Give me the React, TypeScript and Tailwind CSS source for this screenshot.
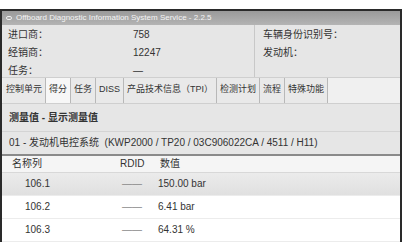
const font = { fontFamily: '"Liberation Sans", "Noto Sans CJK SC", sans-serif' };

const tabs = ['控制单元', '得分', '任务', 'DISS', '产品技术信息（TPI）', '检测计划', '流程', '特殊功能'];

const rows = [
  { name: '106.1', rdid: '——', value: '150.00 bar' },
  { name: '106.2', rdid: '——', value: '6.41 bar' },
  { name: '106.3', rdid: '——', value: '64.31 %' },
];

export default function App() {
  return (
    <div className="w-[407px] h-[242px] bg-white pt-[9px] overflow-hidden text-[#333]" style={font}>
      <div className="w-[402px] h-[233px] border-l-2 border-r-2 border-t-2 border-[#2a2a2a] bg-[#e6e6e6] flex flex-col">
        <div className="h-[14px] bg-gradient-to-b from-[#9a9a9a] to-[#b4b4b4] flex items-center px-1 gap-1 text-[8px] text-[#f4f4f4]">
          <span className="w-[6px] h-[4px] border border-[#eee] rounded-sm" />
          <span>Offboard Diagnostic Information System Service - 2.2.5</span>
        </div>

        <div className="flex h-[53px] text-[10px] border-b border-[#cfcfcf]">
          <div className="w-[253px] border-r border-[#c8c8c8] flex flex-col px-[6px] pt-[4px] gap-[6px]">
            {[
              ['进口商：', '758'],
              ['经销商：', '12247'],
              ['任务：', '—'],
            ].map(([k, v]) => (
              <div key={k} className="flex h-[12px] items-center">
                <span className="w-[125px]">{k}</span>
                <span>{v}</span>
              </div>
            ))}
          </div>
          <div className="flex-1 flex flex-col pl-[8px] pt-[4px] gap-[6px]">
            <div className="h-[12px] flex items-center">车辆身份识别号：</div>
            <div className="h-[12px] flex items-center">发动机：</div>
          </div>
        </div>

        <div className="flex h-[27px] bg-[#f0f0f0] text-[9px] border-b border-[#cfcfcf] pl-[1px]">
          {tabs.map((t, i) => (
            <div
              key={t}
              className={`px-[3px] flex items-center border-r border-[#b8b8b8] ${i === 1 ? 'bg-[#f7f7f7]' : 'bg-[#e9e9e9]'}`}
            >
              {t}
            </div>
          ))}
        </div>

        <div className="h-[29px] flex items-center px-[7px] text-[10px] font-bold border-b border-[#d4d4d4]">
          测量值 - 显示测量值
        </div>
        <div className="h-[25px] flex items-center px-[7px] text-[10px] border-b-2 border-[#8a8a8a]">
          01 - 发动机电控系统&nbsp;&nbsp;(KWP2000 / TP20 / 03C906022CA / 4511 / H11)
        </div>

        <div className="flex-1 bg-white text-[10px]">
          <div className="h-[17px] flex items-center bg-[#f5f5f5] border-b border-[#d8d8d8]">
            <span className="w-[118px] pl-[10px]">名称列</span>
            <span className="w-[40px]">RDID</span>
            <span>数值</span>
          </div>
          {rows.map((r, i) => (
            <div
              key={r.name}
              className={`h-[23px] flex items-center border-b border-[#ececec] ${i === 0 ? 'bg-gradient-to-b from-[#ebebeb] to-[#e0e0e0]' : 'bg-white'}`}
            >
              <span className="w-[120px] pl-[23px]">{r.name}</span>
              <span className="w-[36px] text-[#888]">{r.rdid}</span>
              <span>{r.value}</span>
            </div>
          ))}
        </div>
      </div>
    </div>
  );
}
